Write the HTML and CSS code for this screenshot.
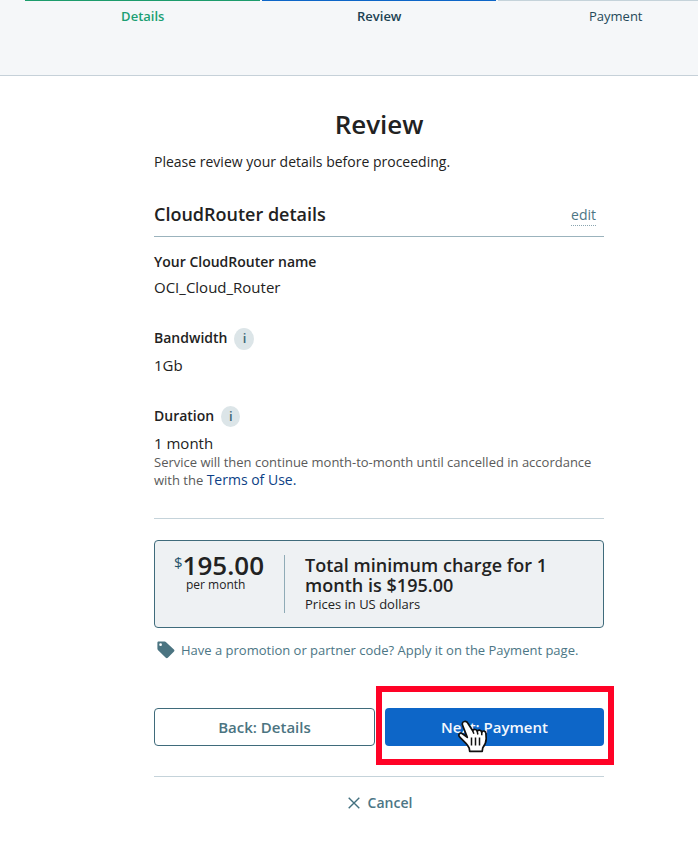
FILE: index.html
```html
<!DOCTYPE html>
<html lang="en">
<head>
<meta charset="utf-8">
<title>Review</title>
<link rel="stylesheet" href="styles.css">
</head>
<body>
<header class="steps">
  <div class="step step-done"><span>Details</span></div>
  <div class="step step-active"><span>Review</span></div>
  <div class="step"><span>Payment</span></div>
</header>
<main class="content">
  <h1><span>Review</span></h1>
  <p class="intro"><span>Please review your details before proceeding.</span></p>
  <div class="section-head">
    <h2><span>CloudRouter details</span></h2>
    <a class="edit"><span>edit</span></a>
  </div>
  <section class="field field-name">
    <h3><span>Your CloudRouter name</span></h3>
    <p class="value"><span>OCI_Cloud_Router</span></p>
  </section>
  <section class="field field-band">
    <h3><span class="label">Bandwidth</span><i class="info">i</i></h3>
    <p class="value"><span>1Gb</span></p>
  </section>
  <section class="field field-term">
    <h3><span class="label">Duration</span><i class="info info-small">i</i></h3>
    <p class="value"><span>1 month</span></p>
    <p class="note"><span class="note-line">Service will then continue month-to-month until cancelled in accordance</span><br>with the <a class="terms">Terms of Use.</a></p>
  </section>
  <section class="total">
    <div class="price">
      <div class="amount"><span class="currency">$</span><span class="num">195.00</span></div>
      <div class="per"><span>per month</span></div>
    </div>
    <div class="summary">
      <h2>Total minimum charge for 1<br>month is $195.00</h2>
      <p><span>Prices in US dollars</span></p>
    </div>
  </section>
  <p class="promo">
    <svg class="tag" width="18" height="18" viewBox="0 0 18 18"><path fill="#4b7481" fill-rule="evenodd" d="M1.600.600h6.100c.500 0 1 .200 1.400.600l7.800 7.400c.700.600.700 1.400.100 2l-6.200 6.200c-.600.600-1.400.600-2 0L1.100 9.300C.700 8.900.400 8.400.400 7.800V1.800C.400 1.100.900.600 1.600.600ZM3.600 2.300a1.350 1.350 0 1 0 0 2.700 1.350 1.350 0 0 0 0-2.700Z"/></svg>
    <span>Have a promotion or partner code? Apply it on the Payment page.</span>
  </p>
  <div class="actions">
    <button class="btn btn-back"><span>Back: Details</span></button>
    <div class="next-wrap">
      <button class="btn btn-next"><span>Next: Payment</span></button>
      <div class="highlight"></div>
      <svg class="pointer" width="32" height="34" viewBox="0 0 32 34"><path fill="#fff" stroke="#111" stroke-width="1.700" stroke-linejoin="round" d="M8.300 2.500C6.400 3 5.900 4.700 6.600 6.400l4.700 12-4.100-3.100c-1.500-1.200-3.200-1.300-4-.3-.8 1.100-.4 2.200.8 3.400l6.200 6.200c1.300 1.300 2.200 3 3 4.600l.5 3.200h12.500l.6-3.700c2.100-2.800 3.500-5.400 3.400-9l-.3-5.500c-.1-2.400-3.300-3-4.200-.9-.3-2.500-3.600-3-4.500-1-.5-2.200-3.700-2.500-4.500-.5L12 4.500c-.6-1.600-2-2.500-3.700-2Z"/><path fill="none" stroke="#111" stroke-width="1.500" d="M16.700 11.800l1.200 3M21.200 12.300l.7 3.200M25.700 13.200l.1 3M15.500 18.500v8M19.500 18.500v8M23.500 18.500v8"/></svg>
    </div>
  </div>
  <div class="cancel"><svg width="12" height="12" viewBox="0 0 12 12"><path fill="none" stroke="#43707f" stroke-width="1.400" d="M.7.700l10.600 10.600M11.300.700L.700 11.300"/></svg><span>Cancel</span></div>
</main>
</body>
</html>
```
FILE: styles.css
```css
* { box-sizing: border-box; margin: 0; padding: 0; }
body {
  background: #fff;
  color: #222;
  font-family: "Open Sans", "Noto Sans", sans-serif;
  overflow: hidden;
  height: 861px;
}
.steps {
  display: flex;
  gap: 2px;
  height: 76px;
  padding-left: 25px;
  background: #f5f7f9;
  border-bottom: 1px solid #c6d1d9;
  overflow: hidden;
}
.step {
  flex: 0 0 234.5px;
  border-top: 1px solid #c5d3da;
  padding: 5px 0 0 1px;
  height: 40px;
  text-align: center;
  font-size: 13px;
  line-height: 20px;
  color: #24495a;
}
.step-done { border-color: #1c9c6c; color: #1c9f73; font-weight: 600; }
.step-active { border-color: #0d66c8; color: #1c4253; font-weight: 600; }
.content { width: 450px; margin-left: 154px; padding-top: 32px; }
h1 { font-size: 26px; font-weight: 600; letter-spacing: -0.05px; line-height: 32px; height: 44px; text-align: center; }
.intro { font-size: 14px; line-height: 20px; height: 48px; }
.section-head {
  display: flex;
  justify-content: space-between;
  height: 37px;
  padding: 4px 8px 0 0;
  border-bottom: 1px solid #9bb3bd;
}
.section-head h2 { font-size: 18px; font-weight: 600; line-height: 20px; }
.edit { height: 22px; font-size: 14px; line-height: 22px; color: #4c7685; border-bottom: 1px dotted #8aa5b0; }
h3 { display: flex; align-items: center; height: 22px; font-size: 14px; font-weight: 600; line-height: 20px; }
.value { font-size: 15px; line-height: 22px; }
.field-name { padding-top: 14px; height: 91px; }
.field-name .value { padding-top: 3px; }
.label { padding-bottom: 2px; }
.field-band { height: 78px; }
.field-band .value, .field-term .value { padding-top: 4px; }
.field-term { height: 113px; border-bottom: 1px solid #c5d3da; }
.info {
  width: 20px;
  height: 22px;
  margin-left: 7px;
  border-radius: 50%;
  background: #dce5e8;
  color: #3c6877;
  font-size: 13px;
  font-style: normal;
  font-weight: 600;
  line-height: 21px;
  text-align: center;
}
.info-small { width: 19px; height: 21px; line-height: 20px; margin-bottom: 1px; }
.note { margin-top: -1px; font-size: 13px; line-height: 18px; color: #5a5a5a; }
.terms { font-size: 14px; color: #0d3f86; }
.total {
  display: flex;
  height: 88px;
  margin-top: 21px;
  padding: 14px 20px 0 0;
  border: 1px solid #3f6b7b;
  border-radius: 4px;
  background: #eef1f3;
}
.price { width: 130px; height: 58px; border-right: 1px solid #8fabb6; padding-left: 19px; }
.amount { display: flex; height: 21px; line-height: 20px; }
.currency { font-size: 15px; line-height: 14px; color: #24536a; }
.num { font-size: 26px; font-weight: 600; }
.per { font-size: 12px; line-height: 18px; padding-left: 12px; }
.summary { padding-left: 20px; }
.summary h2 { font-size: 18px; font-weight: 600; letter-spacing: 0.03px; line-height: 20px; }
.summary p { font-size: 13px; line-height: 18px; }
.promo { display: flex; align-items: center; gap: 6px; height: 20px; margin-top: 12px; padding-left: 3px; font-size: 13px; color: #4c7685; }
.actions { display: flex; gap: 10px; margin-top: 48px; height: 69px; border-bottom: 1px solid #c5d3da; }
.btn { height: 38px; border-radius: 4px; font-family: inherit; font-size: 15px; font-weight: 600; line-height: 20px; }
.btn-back { width: 221px; border: 1px solid #3f6b7b; background: #fff; color: #4b7481; }
.next-wrap { position: relative; width: 219px; }
.btn-next { width: 100%; border: 0; background: #0d66c8; color: #f4f8fd; }
.highlight { position: absolute; left: -9px; top: -22px; width: 238px; height: 79px; border: 6px solid #ff0226; }
.pointer { position: absolute; left: 71px; top: 11px; }
.cancel { display: flex; align-items: center; justify-content: center; gap: 8px; height: 20px; margin: 16px 0 0 2px; font-size: 14px; font-weight: 600; color: #4c7685; }
.cancel span { padding-bottom: 2px; }
```
